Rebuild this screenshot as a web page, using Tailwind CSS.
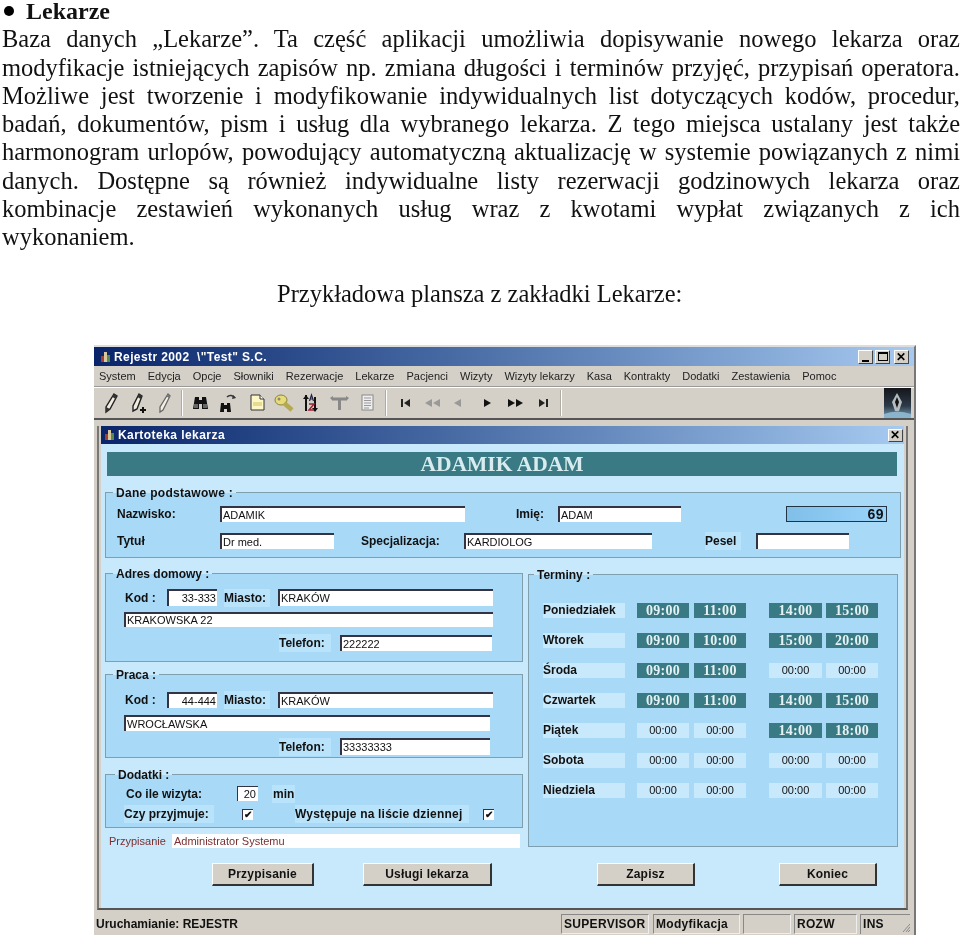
<!DOCTYPE html>
<html lang="pl">
<head>
<meta charset="UTF-8" />
<title>Lekarze</title>
<script src="https://cdn.jsdelivr.net/npm/@tailwindcss/browser@4"></script>
</head>
<body class="bg-white text-black overflow-hidden font-['Liberation_Serif',serif]">

  <!-- Document text -->
  <section class="-mt-[3px] pl-[2px] text-[24.5px] leading-[28.3px] text-[#111] blur-[0.25px]">
    <h1 class="flex items-center font-bold text-[24px] h-[28.3px]"><span class="ml-[2px] mr-[12px] w-[10px] h-[10px] rounded-full bg-black"></span>Lekarze</h1>
    <p class="text-justify [text-align-last:justify]">Baza danych „Lekarze”. Ta część aplikacji umożliwia dopisywanie nowego lekarza oraz</p>
    <p class="text-justify [text-align-last:justify]">modyfikacje istniejących zapisów np. zmiana długości i terminów przyjęć, przypisań operatora.</p>
    <p class="text-justify [text-align-last:justify]">Możliwe jest tworzenie i modyfikowanie indywidualnych list dotyczących kodów, procedur,</p>
    <p class="text-justify [text-align-last:justify]">badań, dokumentów, pism i usług dla wybranego lekarza. Z tego miejsca ustalany jest także</p>
    <p class="text-justify [text-align-last:justify]">harmonogram urlopów, powodujący automatyczną aktualizację w systemie powiązanych z nimi</p>
    <p class="text-justify [text-align-last:justify]">danych. Dostępne są również indywidualne listy rezerwacji godzinowych lekarza oraz</p>
    <p class="text-justify [text-align-last:justify]">kombinacje zestawień wykonanych usług wraz z kwotami wypłat związanych z ich</p>
    <p>wykonaniem.</p>
    <p class="mt-[28.3px] pl-[275px]">Przykładowa plansza z zakładki Lekarze:</p>
  </section>

  <!-- Application window -->
  <div class="ml-[94px] mt-[37px] w-[822px] h-[590px] flex flex-col bg-[#d4d0c8] border-t-2 border-t-[#ddd] border-r-2 border-r-[#777] font-['Liberation_Sans',sans-serif] text-[#111] blur-[0.35px]">

    <div class="h-[19px] shrink-0 flex items-center pl-[5px] bg-linear-to-r from-[#0a246a] to-[#a6caf0] text-white text-[12px] font-bold tracking-[0.4px]">
      <svg class="w-[12px] h-[12px] mr-[3px]" viewBox="0 0 12 12"><rect x="5" y="1" width="3" height="10" fill="#d8c8a0"/><rect x="2" y="5" width="3" height="6" fill="#a04030"/><rect x="8" y="4" width="3" height="7" fill="#5a8a50"/></svg>
      <span>Rejestr 2002&nbsp; \"Test" S.C.</span>
      <div class="ml-auto mr-[5px] flex gap-[2px]">
        <span class="w-[15px] h-[14px] bg-[#d4d0c8] border border-t-white border-l-white border-r-[#444] border-b-[#444] flex items-end justify-center pb-[1px]"><i class="block w-[7px] h-[2px] bg-black"></i></span>
        <span class="w-[15px] h-[14px] bg-[#d4d0c8] border border-t-white border-l-white border-r-[#444] border-b-[#444] flex items-center justify-center"><i class="block w-[10px] h-[9px] border border-black border-t-2"></i></span>
        <span class="ml-[2px] w-[15px] h-[14px] bg-[#d4d0c8] border border-t-white border-l-white border-r-[#444] border-b-[#444] flex items-center justify-center text-black text-[12px] leading-none">✕</span>
      </div>
    </div>

    <nav class="h-[21px] shrink-0 flex items-center gap-[12px] pl-[5px] text-[11px] border-b border-b-[#999] text-[#222]">
      <span>System</span><span>Edycja</span><span>Opcje</span><span>Słowniki</span><span>Rezerwacje</span><span>Lekarze</span><span>Pacjenci</span><span>Wizyty</span><span>Wizyty lekarzy</span><span>Kasa</span><span>Kontrakty</span><span>Dodatki</span><span>Zestawienia</span><span>Pomoc</span>
    </nav>

    <!-- Toolbar -->
    <div class="h-[33px] shrink-0 flex items-center pl-[9px] border-t border-t-white border-b-2 border-b-[#555]">
      <svg class="w-[16px] h-[24px]" viewBox="0 0 16 24"><path d="M11 3l3 2-7 13-4 3 0-5z" fill="#f0ece0" stroke="#222" stroke-width="1.4"/><path d="M11 3l3 2-1.500 3-3-2z" fill="#333"/><path d="M3 16l4 2-4 3z" fill="#333"/></svg>
      <svg class="ml-[11px] w-[18px] h-[24px]" viewBox="0 0 18 24"><path d="M9 3l3 2-5 13-4 2 0-5z" fill="#f0ece0" stroke="#222" stroke-width="1.4"/><path d="M9 3l3 2-1.500 3-3-2z" fill="#333"/><path d="M13 16v6M10 19h6" stroke="#111" stroke-width="2"/></svg>
      <svg class="ml-[10px] w-[14px] h-[24px]" viewBox="0 0 14 24"><path d="M10 3l2 2-7 14-3 2 0-5z" fill="#f4f0e6" stroke="#666" stroke-width="1.300"/><path d="M10 3l2 2-1 2-2.500-1.500z" fill="#777"/></svg>
      <i class="block ml-[9px] w-[2px] h-[26px] bg-[#b0aca4] border-r border-r-white"></i>
      <svg class="ml-[9px] w-[17px] h-[24px]" viewBox="0 0 17 24"><path d="M3 6h4v3h3V6h4l2 12h-6v-5H7v5H1z" fill="#111"/><rect x="2" y="13" width="4" height="4" fill="#666"/><rect x="11" y="13" width="4" height="4" fill="#666"/></svg>
      <svg class="ml-[10px] w-[18px] h-[24px]" viewBox="0 0 18 24"><path d="M2 12h3v2h3v-2h3l1 9H8v-3H5v3H1z" fill="#111"/><path d="M8 6a5 5 0 0 1 8 1" fill="none" stroke="#333" stroke-width="1.500"/><path d="M14 4l3 3-4 1z" fill="#333"/></svg>
      <svg class="ml-[13px] w-[15px] h-[24px]" viewBox="0 0 15 24"><path d="M1 4h9l4 4v11H1z" fill="#fdf7c8" stroke="#333"/><path d="M10 4v4h4" fill="#fff" stroke="#333"/><path d="M3 11h9v4H3z" fill="#e6dc90"/></svg>
      <svg class="ml-[9px] w-[20px] h-[24px]" viewBox="0 0 20 24"><ellipse cx="7" cy="9" rx="6" ry="5" fill="#e8dc78" stroke="#8a8040"/><path d="M10 12l8 7" stroke="#b4a850" stroke-width="4.500"/><circle cx="5" cy="8" r="1.500" fill="#887"/></svg>
      <svg class="ml-[9px] w-[15px] h-[24px]" viewBox="0 0 15 24"><path d="M3 4v16" stroke="#111" stroke-width="2"/><path d="M0 8l3-4 3 4z" fill="#111"/><path d="M12 6v14" stroke="#111" stroke-width="2"/><path d="M9 17l3 4 3-4z" fill="#111"/><path d="M6.500 10l2-6 2 6M7 8h3" fill="none" stroke="#224" stroke-width="1.200"/><path d="M6 13h5l-5 6h5" fill="none" stroke="#a02030" stroke-width="1.500"/></svg>
      <svg class="ml-[12px] w-[19px] h-[24px]" viewBox="0 0 19 24"><path d="M3 8h13M9.500 8v11" stroke="#888" stroke-width="3"/><path d="M0 7l3-2v5zM19 7l-3-2v5z" fill="#888"/></svg>
      <svg class="ml-[12px] w-[13px] h-[24px]" viewBox="0 0 13 24"><rect x="1" y="4" width="11" height="15" fill="#eee" stroke="#888"/><path d="M3 7h7M3 9.500h7M3 12h7M3 14.500h7M3 17h5" stroke="#999"/></svg>
      <i class="block ml-[11px] w-[2px] h-[26px] bg-[#b0aca4] border-r border-r-white"></i>
      <svg class="ml-[13px] w-[11px] h-[24px]" viewBox="0 0 11 24"><path d="M1 8h2v8H1zM10 8v8l-6-4z" fill="#222"/></svg>
      <svg class="ml-[12px] w-[18px] h-[24px]" viewBox="0 0 18 24"><path d="M9 8v8l-7-4zM17 8v8l-7-4z" fill="#999"/></svg>
      <svg class="ml-[12px] w-[9px] h-[24px]" viewBox="0 0 9 24"><path d="M8 8v8l-7-4z" fill="#999"/></svg>
      <svg class="ml-[21px] w-[9px] h-[24px]" viewBox="0 0 9 24"><path d="M1 8v8l7-4z" fill="#111"/></svg>
      <svg class="ml-[15px] w-[18px] h-[24px]" viewBox="0 0 18 24"><path d="M1 8v8l7-4zM9 8v8l7-4z" fill="#111"/></svg>
      <svg class="ml-[13px] w-[11px] h-[24px]" viewBox="0 0 11 24"><path d="M1 8v8l6-4zM8 8h2v8H8z" fill="#222"/></svg>
      <i class="block ml-[11px] w-[2px] h-[26px] bg-[#b0aca4] border-r border-r-white"></i>
      <svg class="ml-auto mr-[3px] w-[27px] h-[30px]" viewBox="0 0 27 30"><defs><linearGradient id="logoBg" x1="0" y1="0" x2="0" y2="1"><stop offset="0" stop-color="#15161a"/><stop offset=".6" stop-color="#2c3a48"/><stop offset="1" stop-color="#7aa0b8"/></linearGradient></defs><rect width="27" height="30" fill="url(#logoBg)"/><path d="M13 5l5 9-3 9h-4l-3-9z" fill="#b4bcc0"/><path d="M13 9l2 5-2 6-2-6z" fill="#111"/><path d="M0 26q13-5 27 0v4H0z" fill="#8ab4cc"/></svg>
    </div>

    <div class="flex-1 flex flex-col pl-[3px] pr-[6px] pt-[6px]">
      <!-- Child window -->
      <div class="h-[484px] pl-[2px] pr-[2px] bg-[#d4d0c8] border-l-2 border-l-[#777] border-r-2 border-r-[#777] border-b-2 border-b-[#555] flex flex-col">
        <div class="h-[18px] shrink-0 flex items-center pl-[2px] bg-linear-to-r from-[#0a246a] to-[#a6caf0] text-white text-[12px] font-bold tracking-[0.45px]">
          <svg class="w-[12px] h-[12px] mr-[3px]" viewBox="0 0 12 12"><rect x="5" y="1" width="3" height="10" fill="#d8c8a0"/><rect x="2" y="5" width="3" height="6" fill="#a04030"/><rect x="8" y="4" width="3" height="7" fill="#5a8a50"/></svg>
          <span>Kartoteka lekarza</span>
          <span class="ml-auto mr-[1px] w-[15px] h-[13px] bg-[#d4d0c8] border border-t-white border-l-white border-r-[#444] border-b-[#444] flex items-center justify-center text-black text-[12px] leading-none">✕</span>
        </div>

        <div class="flex-1 bg-[#c8e8fc] pl-[4px] pt-[8px]">
          <div class="ml-[2px] w-[790px] h-[24px] flex items-center justify-center bg-[#3a7a84] text-[#d8ecef] text-[21.5px] font-bold font-['Liberation_Serif',serif]">ADAMIK ADAM</div>

          <!-- Dane podstawowe -->
          <div class="relative mt-[16px] w-[796px] h-[66px] bg-[#a8daf8] border border-[#7f9fae]">
            <span class="absolute -top-[9px] left-[7px] px-[3px] h-[18px] leading-[18px] text-[12px] font-bold tracking-[0.3px] text-[#111] bg-[linear-gradient(#c8e8fc_50%,#a8daf8_50%)]">Dane podstawowe :</span>
            <div class="flex items-center pt-[13px] h-[29px] text-[12px] font-bold">
              <span class="ml-[11px] w-[103px]">Nazwisko:</span>
              <span class="w-[245px] h-[16px] pl-[1px] bg-white border-t-2 border-l-2 border-[#334] text-[11px] leading-[14px] font-normal">ADAMIK</span>
              <span class="ml-[51px] w-[42px]">Imię:</span>
              <span class="w-[123px] h-[16px] pl-[1px] bg-white border-t-2 border-l-2 border-[#334] text-[11px] leading-[14px] font-normal">ADAM</span>
              <span class="ml-[105px] w-[101px] h-[16px] pr-[2px] text-right text-[14px] tracking-[0.5px] leading-[14px] bg-linear-to-r from-[#80bfe8] to-[#9ad4fb] border border-[#234]">69</span>
            </div>
            <div class="flex items-center mt-[11px] h-[16px] text-[12px] font-bold">
              <span class="ml-[11px] w-[103px]">Tytuł</span>
              <span class="w-[114px] h-[16px] pl-[1px] bg-white border-t-2 border-l-2 border-[#334] text-[11px] leading-[14px] font-normal">Dr med.</span>
              <span class="ml-[27px] w-[103px]">Specjalizacja:</span>
              <span class="w-[188px] h-[16px] pl-[1px] bg-white border-t-2 border-l-2 border-[#334] text-[11px] leading-[14px] font-normal">KARDIOLOG</span>
              <span class="ml-[53px] w-[36px] mr-[15px] bg-[#b9e3fb]">Pesel</span>
              <span class="w-[93px] h-[16px] bg-white border-t-2 border-l-2 border-[#334]"></span>
            </div>
          </div>

          <div class="mt-[15px] flex gap-[5px]">
            <div class="w-[418px]">
              <!-- Adres domowy -->
              <div class="relative h-[89px] bg-[#a8daf8] border border-[#7f9fae]">
                <span class="absolute -top-[9px] left-[7px] px-[3px] h-[18px] leading-[18px] text-[12px] font-bold text-[#111] bg-[linear-gradient(#c8e8fc_50%,#a8daf8_50%)]">Adres domowy :</span>
                <div class="flex items-center pt-[15px] h-[32px] text-[12px] font-bold">
                  <span class="ml-[19px] w-[42px]">Kod :</span>
                  <span class="w-[50px] h-[17px] pr-[1px] text-right bg-white border-t-2 border-l-2 border-[#334] text-[11px] leading-[15px] font-normal">33-333</span>
                  <span class="ml-[7px] w-[46px] mr-[8px] bg-[#b9e3fb]">Miasto:</span>
                  <span class="w-[215px] h-[17px] pl-[1px] bg-white border-t-2 border-l-2 border-[#334] text-[11px] leading-[15px] font-normal">KRAKÓW</span>
                </div>
                <div class="ml-[18px] mt-[6px] w-[369px] h-[15px] pl-[1px] bg-white border-t-2 border-l-2 border-[#334] text-[11px] leading-[13px]">KRAKOWSKA 22</div>
                <div class="flex items-center mt-[8px] h-[16px] text-[12px] font-bold">
                  <span class="ml-[173px] w-[52px] mr-[9px] bg-[#b9e3fb]">Telefon:</span>
                  <span class="w-[152px] h-[16px] pl-[1px] bg-white border-t-2 border-l-2 border-[#334] text-[11px] leading-[14px] font-normal">222222</span>
                </div>
              </div>
              <!-- Praca -->
              <div class="relative mt-[12px] h-[84px] bg-[#a8daf8] border border-[#7f9fae]">
                <span class="absolute -top-[9px] left-[7px] px-[3px] h-[18px] leading-[18px] text-[12px] font-bold text-[#111] bg-[linear-gradient(#c8e8fc_50%,#a8daf8_50%)]">Praca :</span>
                <div class="flex items-center pt-[17px] h-[33px] text-[12px] font-bold">
                  <span class="ml-[19px] w-[42px]">Kod :</span>
                  <span class="w-[50px] h-[16px] pr-[1px] text-right bg-white border-t-2 border-l-2 border-[#334] text-[11px] leading-[14px] font-normal">44-444</span>
                  <span class="ml-[7px] w-[46px] mr-[8px] bg-[#b9e3fb]">Miasto:</span>
                  <span class="w-[215px] h-[16px] pl-[1px] bg-white border-t-2 border-l-2 border-[#334] text-[11px] leading-[14px] font-normal">KRAKÓW</span>
                </div>
                <div class="ml-[18px] mt-[7px] w-[366px] h-[16px] pl-[1px] bg-white border-t-2 border-l-2 border-[#334] text-[11px] leading-[14px]">WROCŁAWSKA</div>
                <div class="flex items-center mt-[7px] h-[17px] text-[12px] font-bold">
                  <span class="ml-[173px] w-[52px] mr-[9px] bg-[#b9e3fb]">Telefon:</span>
                  <span class="w-[150px] h-[17px] pl-[1px] bg-white border-t-2 border-l-2 border-[#334] text-[11px] leading-[15px] font-normal">33333333</span>
                </div>
              </div>
              <!-- Dodatki -->
              <div class="relative mt-[16px] h-[54px] bg-[#a8daf8] border border-[#7f9fae]">
                <span class="absolute -top-[9px] left-[9px] px-[3px] h-[18px] leading-[18px] text-[12px] font-bold text-[#111] bg-[linear-gradient(#c8e8fc_50%,#a8daf8_50%)]">Dodatki :</span>
                <div class="flex items-center pt-[11px] h-[26px] text-[12px] font-bold">
                  <span class="ml-[20px] w-[111px]">Co ile wizyta:</span>
                  <span class="w-[21px] h-[15px] pr-[2px] text-right bg-white border-t border-l border-[#334] text-[11px] leading-[14px] font-normal">20</span>
                  <span class="ml-[14px] px-[1px] bg-[#b9e3fb]">min</span>
                </div>
                <div class="flex items-center mt-[6px] h-[14px] text-[12px] font-bold">
                  <span class="ml-[18px] w-[90px] mr-[28px] bg-[#b9e3fb]">Czy przyjmuje:</span>
                  <span class="w-[11px] h-[11px] bg-white border-t border-l border-[#334] flex items-center justify-center text-[10px] leading-none">✔</span>
                  <span class="ml-[42px] w-[174px] mr-[14px] tracking-[0.2px] bg-[#b9e3fb] whitespace-nowrap">Występuje na liście dziennej</span>
                  <span class="w-[11px] h-[11px] bg-white border-t border-l border-[#334] flex items-center justify-center text-[10px] leading-none">✔</span>
                </div>
              </div>
              <div class="flex items-center mt-[6px] h-[14px] text-[11px] text-[#7a3030]">
                <span class="ml-[4px] w-[63px]">Przypisanie</span>
                <span class="w-[348px] h-[14px] pl-[2px] leading-[14px] bg-white">Administrator Systemu</span>
              </div>
            </div>

            <!-- Terminy -->
            <div class="relative mt-[1px] w-[370px] h-[273px] bg-[#a8daf8] border border-[#7f9fae] text-[11px]">
              <span class="absolute -top-[9px] left-[5px] px-[3px] h-[18px] leading-[18px] text-[12px] font-bold text-[#111] bg-[linear-gradient(#c8e8fc_50%,#a8daf8_50%)]">Terminy :</span>
              <div class="ml-[14px] mt-[28px] grid grid-cols-[82px_52px_52px_53px_52px] gap-y-[15px] auto-rows-[15px] leading-[15px] text-center">
                <span class="bg-[#c8e8fc] text-left text-[12px] font-bold">Poniedziałek</span><span class="ml-[12px] w-[52px] bg-[#3a7a84] text-[#e4f2f4] font-bold font-['Liberation_Serif',serif] text-[14px] tracking-[0.3px]">09:00</span><span class="ml-[17px] w-[52px] bg-[#3a7a84] text-[#e4f2f4] font-bold font-['Liberation_Serif',serif] text-[14px] tracking-[0.3px]">11:00</span><span class="ml-[40px] w-[53px] bg-[#3a7a84] text-[#e4f2f4] font-bold font-['Liberation_Serif',serif] text-[14px] tracking-[0.3px]">14:00</span><span class="ml-[44px] w-[52px] bg-[#3a7a84] text-[#e4f2f4] font-bold font-['Liberation_Serif',serif] text-[14px] tracking-[0.3px]">15:00</span>
                <span class="bg-[#c8e8fc] text-left text-[12px] font-bold">Wtorek</span><span class="ml-[12px] w-[52px] bg-[#3a7a84] text-[#e4f2f4] font-bold font-['Liberation_Serif',serif] text-[14px] tracking-[0.3px]">09:00</span><span class="ml-[17px] w-[52px] bg-[#3a7a84] text-[#e4f2f4] font-bold font-['Liberation_Serif',serif] text-[14px] tracking-[0.3px]">10:00</span><span class="ml-[40px] w-[53px] bg-[#3a7a84] text-[#e4f2f4] font-bold font-['Liberation_Serif',serif] text-[14px] tracking-[0.3px]">15:00</span><span class="ml-[44px] w-[52px] bg-[#3a7a84] text-[#e4f2f4] font-bold font-['Liberation_Serif',serif] text-[14px] tracking-[0.3px]">20:00</span>
                <span class="bg-[#c8e8fc] text-left text-[12px] font-bold">Środa</span><span class="ml-[12px] w-[52px] bg-[#3a7a84] text-[#e4f2f4] font-bold font-['Liberation_Serif',serif] text-[14px] tracking-[0.3px]">09:00</span><span class="ml-[17px] w-[52px] bg-[#3a7a84] text-[#e4f2f4] font-bold font-['Liberation_Serif',serif] text-[14px] tracking-[0.3px]">11:00</span><span class="ml-[40px] w-[53px] bg-[#c8e8fc]">00:00</span><span class="ml-[44px] w-[52px] bg-[#c8e8fc]">00:00</span>
                <span class="bg-[#c8e8fc] text-left text-[12px] font-bold">Czwartek</span><span class="ml-[12px] w-[52px] bg-[#3a7a84] text-[#e4f2f4] font-bold font-['Liberation_Serif',serif] text-[14px] tracking-[0.3px]">09:00</span><span class="ml-[17px] w-[52px] bg-[#3a7a84] text-[#e4f2f4] font-bold font-['Liberation_Serif',serif] text-[14px] tracking-[0.3px]">11:00</span><span class="ml-[40px] w-[53px] bg-[#3a7a84] text-[#e4f2f4] font-bold font-['Liberation_Serif',serif] text-[14px] tracking-[0.3px]">14:00</span><span class="ml-[44px] w-[52px] bg-[#3a7a84] text-[#e4f2f4] font-bold font-['Liberation_Serif',serif] text-[14px] tracking-[0.3px]">15:00</span>
                <span class="bg-[#c8e8fc] text-left text-[12px] font-bold">Piątek</span><span class="ml-[12px] w-[52px] bg-[#c8e8fc]">00:00</span><span class="ml-[17px] w-[52px] bg-[#c8e8fc]">00:00</span><span class="ml-[40px] w-[53px] bg-[#3a7a84] text-[#e4f2f4] font-bold font-['Liberation_Serif',serif] text-[14px] tracking-[0.3px]">14:00</span><span class="ml-[44px] w-[52px] bg-[#3a7a84] text-[#e4f2f4] font-bold font-['Liberation_Serif',serif] text-[14px] tracking-[0.3px]">18:00</span>
                <span class="bg-[#c8e8fc] text-left text-[12px] font-bold">Sobota</span><span class="ml-[12px] w-[52px] bg-[#c8e8fc]">00:00</span><span class="ml-[17px] w-[52px] bg-[#c8e8fc]">00:00</span><span class="ml-[40px] w-[53px] bg-[#c8e8fc]">00:00</span><span class="ml-[44px] w-[52px] bg-[#c8e8fc]">00:00</span>
                <span class="bg-[#c8e8fc] text-left text-[12px] font-bold">Niedziela</span><span class="ml-[12px] w-[52px] bg-[#c8e8fc]">00:00</span><span class="ml-[17px] w-[52px] bg-[#c8e8fc]">00:00</span><span class="ml-[40px] w-[53px] bg-[#c8e8fc]">00:00</span><span class="ml-[44px] w-[52px] bg-[#c8e8fc]">00:00</span>
              </div>
            </div>
          </div>

          <!-- Buttons -->
          <div class="mt-[15px] flex text-[12px] font-bold tracking-[0.2px]">
            <button class="ml-[107px] w-[102px] h-[23px] bg-[#d4d0c8] border border-t-white border-l-white border-r-[#333] border-r-2 border-b-2 border-b-[#333]">Przypisanie</button>
            <button class="ml-[49px] w-[129px] h-[23px] bg-[#d4d0c8] border border-t-white border-l-white border-r-[#333] border-r-2 border-b-2 border-b-[#333]">Usługi lekarza</button>
            <button class="ml-[105px] w-[98px] h-[23px] bg-[#d4d0c8] border border-t-white border-l-white border-r-[#333] border-r-2 border-b-2 border-b-[#333]">Zapisz</button>
            <button class="ml-[84px] w-[98px] h-[23px] bg-[#d4d0c8] border border-t-white border-l-white border-r-[#333] border-r-2 border-b-2 border-b-[#333]">Koniec</button>
          </div>
        </div>
      </div>

      <!-- Status bar -->
      <div class="mt-[2px] -ml-[3px] -mr-[6px] h-[23px] flex items-center text-[12px] font-bold tracking-[0.3px]">
        <span class="ml-[2px] w-[465px] tracking-normal">Uruchamianie: REJESTR</span>
        <span class="w-[88px] h-[20px] pl-[2px] leading-[18px] border-t border-l border-[#888] border-r border-b border-r-[#eee] border-b-[#eee]">SUPERVISOR</span>
        <span class="ml-[4px] w-[87px] h-[20px] pl-[2px] leading-[18px] border-t border-l border-[#888] border-r border-b border-r-[#eee] border-b-[#eee]">Modyfikacja</span>
        <span class="ml-[3px] w-[48px] h-[20px] border-t border-l border-[#888] border-r border-b border-r-[#eee] border-b-[#eee]"></span>
        <span class="ml-[3px] w-[63px] h-[20px] pl-[2px] leading-[18px] border-t border-l border-[#888] border-r border-b border-r-[#eee] border-b-[#eee]">ROZW</span>
        <span class="ml-[3px] w-[50px] h-[20px] pl-[2px] leading-[18px] border-t border-l border-[#888]">INS</span>
        <svg class="w-[8px] h-[12px] self-end mb-[2px] -ml-[8px]" viewBox="0 0 8 12"><path d="M8 3L1 11M8 6L4 11M8 9L6 11" stroke="#888"/></svg>
      </div>
    </div>
  </div>
</body>
</html>
